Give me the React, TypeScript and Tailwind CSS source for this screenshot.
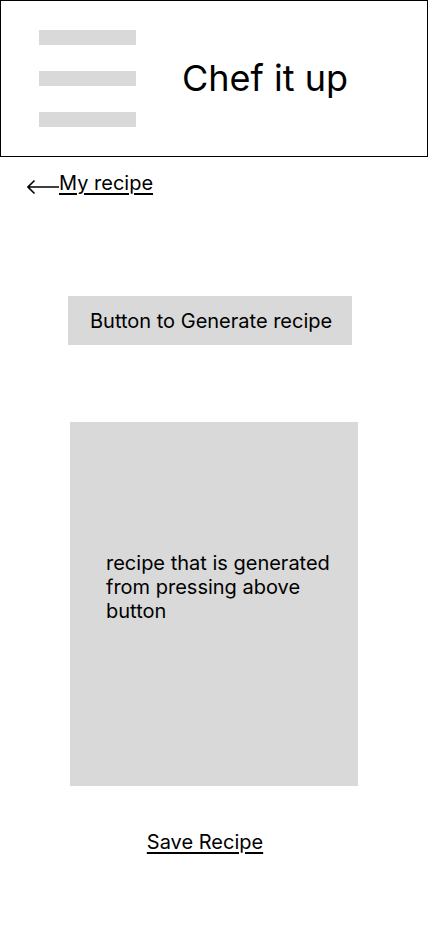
export default function App() {
  return (
    <div className="w-[428px] h-[926px] bg-white font-['Inter',sans-serif] text-black">
      <header className="h-[157px] border border-black flex items-center">
        <div className="ml-[38px] w-[97px] flex flex-col gap-[26px]">
          <span className="h-[15px] bg-[#d9d9d9]" />
          <span className="h-[15px] bg-[#d9d9d9]" />
          <span className="h-[15px] bg-[#d9d9d9]" />
        </div>
        <h1 className="ml-[46px] mb-[2px] text-[36px] leading-none">Chef it up</h1>
      </header>

      <div className="mt-[14px] ml-[27px] flex items-center">
        <svg width="32" height="16" viewBox="0 0 32 16" className="mt-[8px]">
          <path d="M32 8H1M7.5 1.5L1 8l6.5 6.5" fill="none" stroke="black" strokeWidth="1.6" />
        </svg>
        <a href="#" className="text-[20px] leading-6 underline underline-offset-[3px]">
          My recipe
        </a>
      </div>

      <div className="mt-[101px] ml-[68px]">
        <button className="w-[284px] h-[49px] bg-[#d9d9d9] text-[20px] text-left pl-[22px]">
          Button to Generate recipe
        </button>
      </div>

      <div className="mt-[77px] ml-[70px] w-[288px] h-[364px] bg-[#d9d9d9]">
        <p className="pt-[129px] pl-[36px] pr-4 text-[20px] leading-6">
          recipe that is generated from pressing above button
        </p>
      </div>

      <div className="mt-[44px] flex justify-center pr-[18px]">
        <a href="#" className="text-[20px] leading-6 underline underline-offset-[3px]">
          Save Recipe
        </a>
      </div>
    </div>
  );
}
